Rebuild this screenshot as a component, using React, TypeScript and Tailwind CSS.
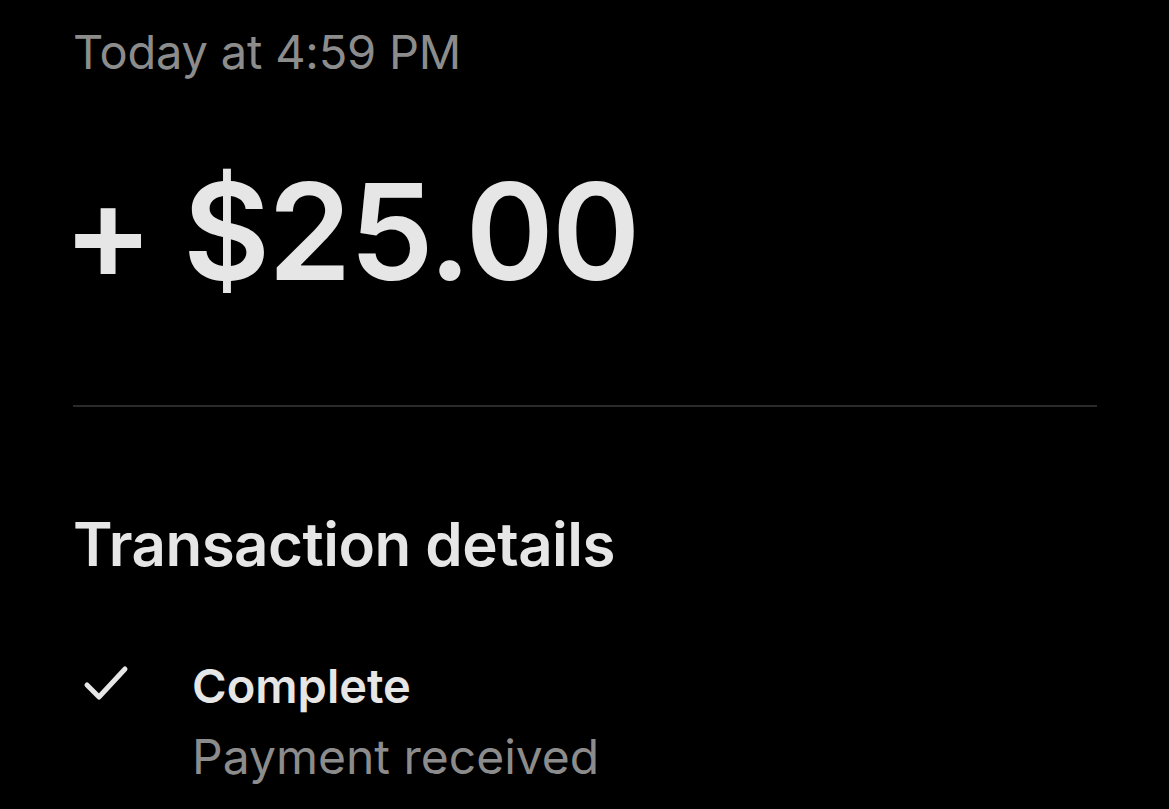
import React from 'react';

const font = { fontFamily: 'Inter, "Noto Sans", sans-serif' };

export default function App() {
    return (
        <div className="min-h-[809px] w-full bg-black overflow-hidden" style={font}>
            <div className="pl-[73px] pr-[72px]">
                <div className="pt-[22px] text-[47px] leading-[60px] text-[#8c8c8c] tracking-[-0.2px]">Today at 4:59 PM</div>
                <div className="mt-[94px] ml-[-10px] text-[134px] leading-[110px] font-semibold text-[#e6e6e6] tracking-[-2px]">+ $25.00</div>
                <div className="mt-[119px] h-[2px] bg-[#2a2a2a]"></div>
                <div className="mt-[102px] text-[60px] leading-[70px] font-semibold text-[#e6e6e6] tracking-[-0.5px]">Transaction details</div>
                <div className="mt-[78px] flex items-start">
                    <svg width="48" height="40" viewBox="0 0 48 40" className="mt-[7px] ml-[9px] shrink-0" fill="none">
                        <path d="M5 21 L17 33 L43 5" stroke="#e6e6e6" strokeWidth="5" strokeLinecap="round" strokeLinejoin="round" />
                    </svg>
                    <div className="ml-[62px]">
                        <div className="text-[47px] leading-[58px] font-semibold text-[#e6e6e6]">Complete</div>
                        <div className="mt-[12px] text-[48px] leading-[60px] text-[#8c8c8c]">Payment received</div>
                    </div>
                </div>
            </div>
        </div>
    );
}
